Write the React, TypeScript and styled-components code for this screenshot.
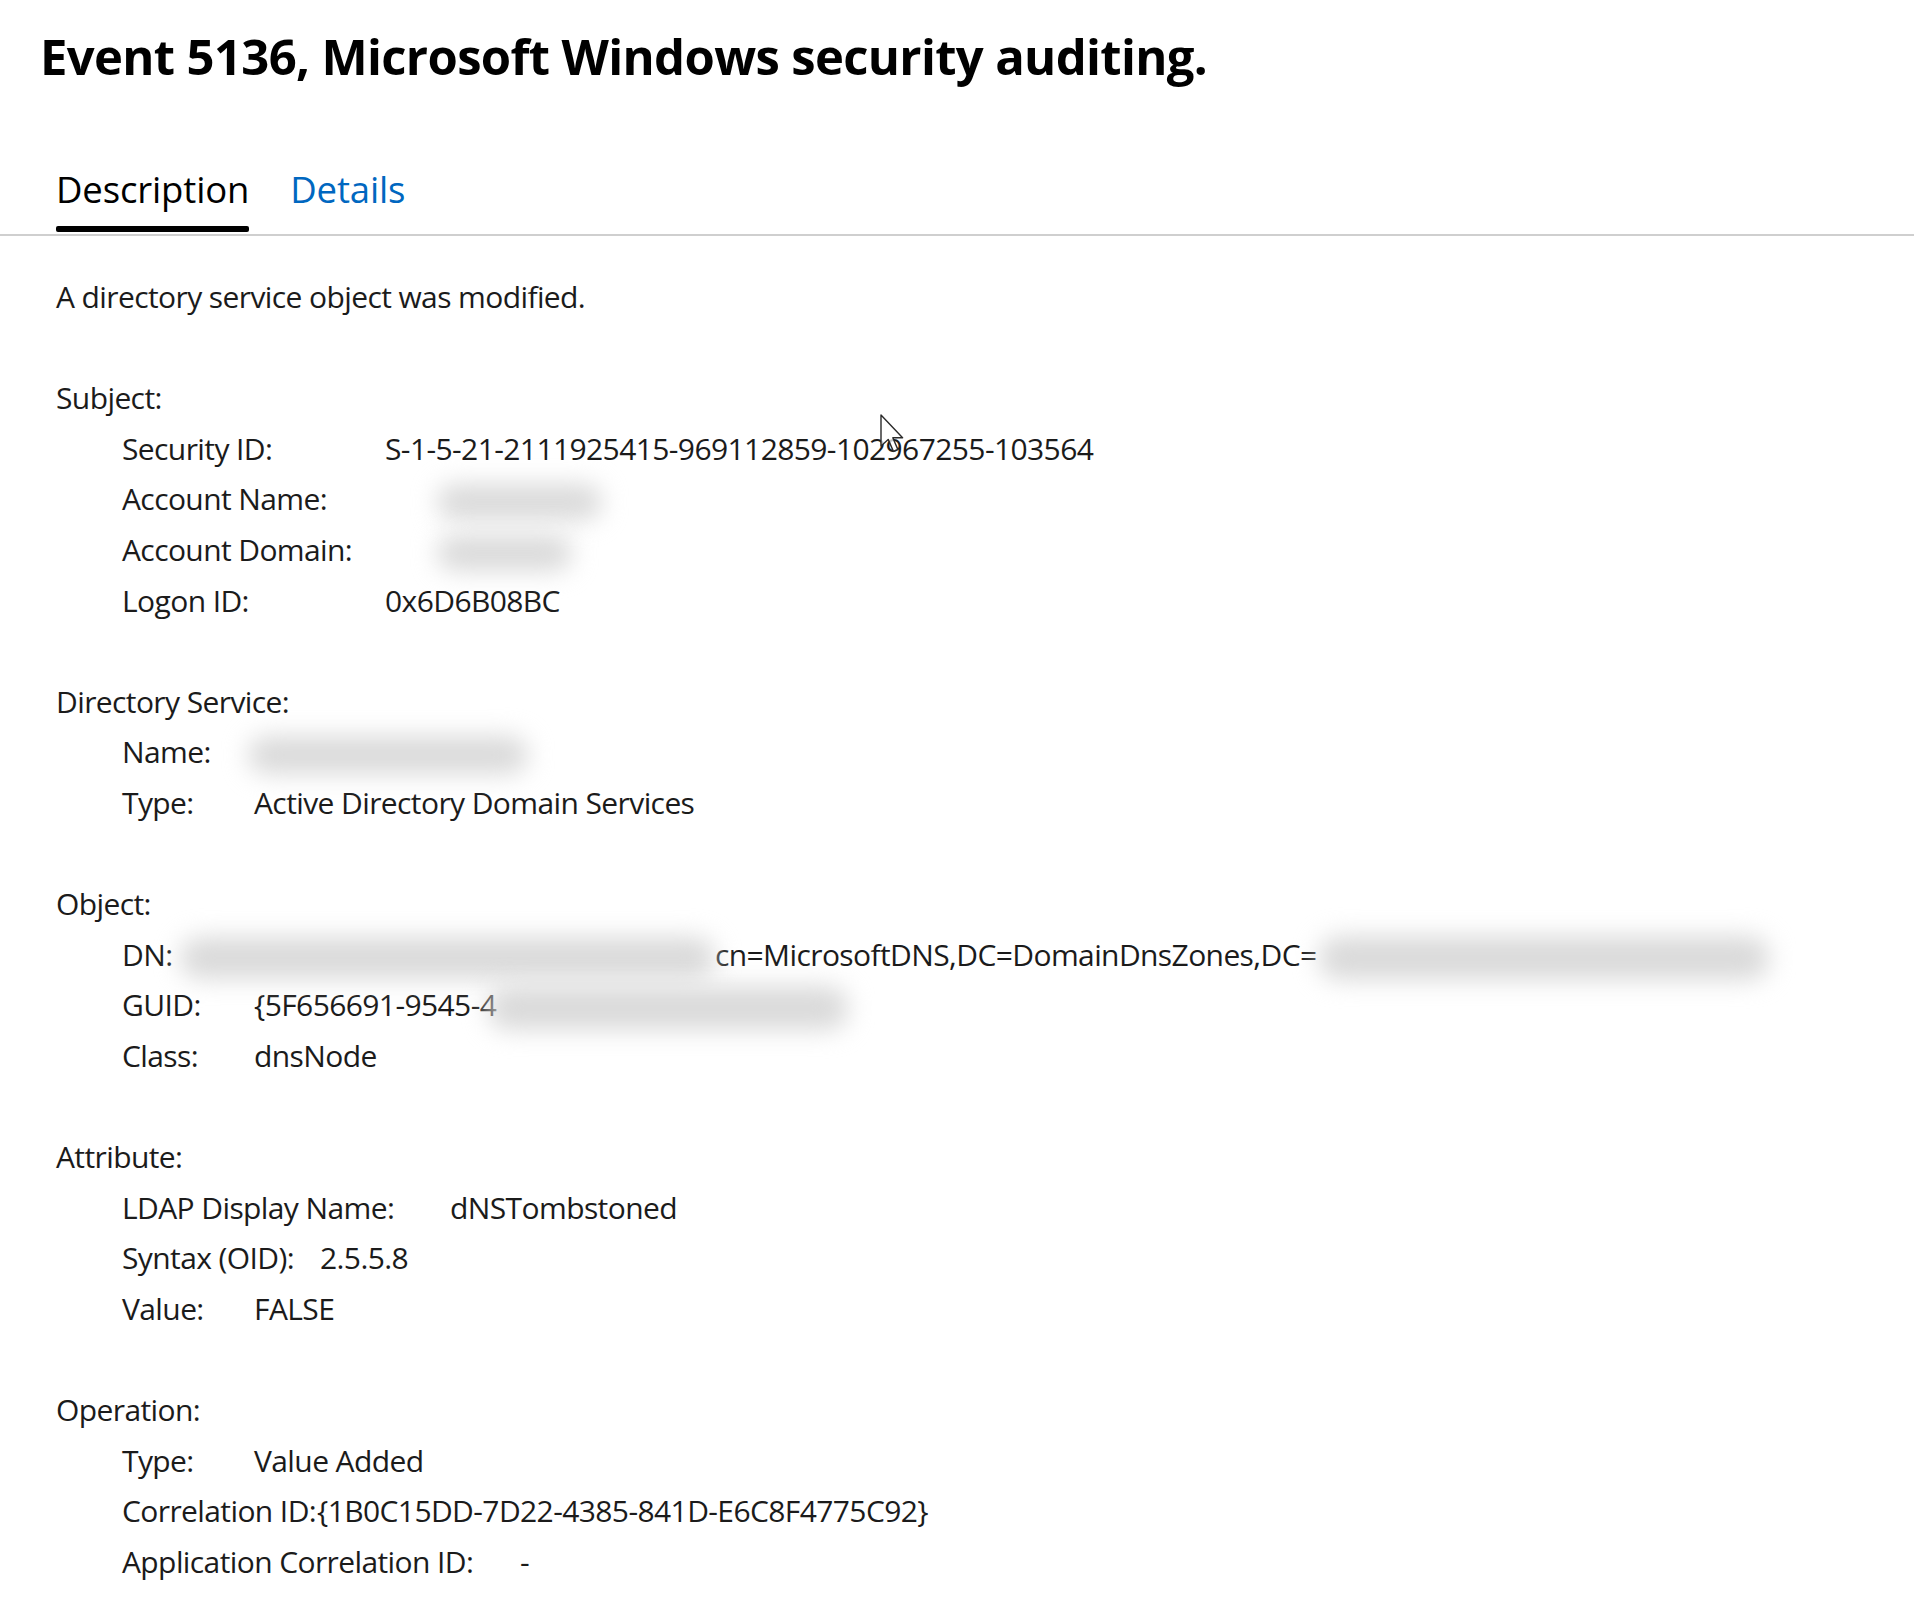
import React from "react";
import styled, { createGlobalStyle } from "styled-components";

const GlobalStyle = createGlobalStyle`
  html, body {
    margin: 0;
    padding: 0;
    background: #ffffff;
  }
  body {
    font-family: "Open Sans", "Noto Sans", "Liberation Sans", sans-serif;
    color: #1b1b1b;
  }
`;

const Page = styled.div`
  position: relative;
  width: 1914px;
  min-height: 1608px;
  background: #ffffff;
  overflow: hidden;
`;

const Title = styled.h1`
  margin: 0;
  padding: 26px 0 0 40px;
  font-size: 49px;
  line-height: 60px;
  font-weight: 700;
  color: #000000;
  letter-spacing: -0.65px;
`;

const TabList = styled.div`
  display: flex;
  align-items: flex-end;
  gap: 41px;
  margin-top: 79px;
  padding-left: 56px;
  border-bottom: 2px solid #cfcfcf;
`;

const Tab = styled.div<{ $active?: boolean }>`
  display: flex;
  flex-direction: column;
  font-size: 36.5px;
  line-height: 48px;
  letter-spacing: -0.15px;
  color: ${(p) => (p.$active ? "#000000" : "#0067c0")};
  font-weight: ${(p) => (p.$active ? 500 : 400)};
  &::after {
    content: "";
    display: block;
    height: 6px;
    margin-top: 13px;
    margin-bottom: 2px;
    border-radius: 2px;
    background: ${(p) => (p.$active ? "#000000" : "transparent")};
  }
`;

const Content = styled.div`
  padding: 36px 0 0 56px;
  font-size: 30px;
  line-height: 50.6px;
  letter-spacing: -0.6px;
  color: #1b1b1b;
`;

const Line = styled.div`
  white-space: nowrap;
`;

const Section = styled.section`
  margin-top: 50.6px;
`;

const Rows = styled.div`
  padding-left: 66px;
`;

const Row = styled.div`
  display: flex;
  align-items: baseline;
  height: 50.6px;
  white-space: nowrap;
`;

const Label = styled.span<{ $w: number }>`
  flex: none;
  min-width: ${(p) => p.$w}px;
`;

const Value = styled.span`
  display: block;
  white-space: nowrap;
`;

const Redacted = styled.span<{ $w: number; $h: number; $shift?: number }>`
  display: inline-block;
  width: ${(p) => p.$w}px;
  height: ${(p) => p.$h}px;
  margin-left: ${(p) => p.$shift ?? 0}px;
  background: #dadada;
  border-radius: 20px;
  filter: blur(12px);
  vertical-align: middle;
`;

const Cursor = styled.svg`
  position: absolute;
  left: 879px;
  top: 413px;
  pointer-events: none;
`;

export default function App() {
  return (
    <Page>
      <GlobalStyle />
      <Title>Event 5136, Microsoft Windows security auditing.</Title>
      <TabList>
        <Tab $active>Description</Tab>
        <Tab>Details</Tab>
      </TabList>
      <Content>
        <Line>A directory service object was modified.</Line>

        <Section>
          <Line>Subject:</Line>
          <Rows>
            <Row>
              <Label $w={263}>Security ID:</Label>
              <Value>S-1-5-21-2111925415-969112859-102967255-103564</Value>
            </Row>
            <Row>
              <Label $w={263}>Account Name:</Label>
              <Value>
                <Redacted $w={165} $h={36} $shift={52} />
              </Value>
            </Row>
            <Row>
              <Label $w={263}>Account Domain:</Label>
              <Value>
                <Redacted $w={135} $h={36} $shift={52} />
              </Value>
            </Row>
            <Row>
              <Label $w={263}>Logon ID:</Label>
              <Value>0x6D6B08BC</Value>
            </Row>
          </Rows>
        </Section>

        <Section>
          <Line>Directory Service:</Line>
          <Rows>
            <Row>
              <Label $w={132}>Name:</Label>
              <Value>
                <Redacted $w={280} $h={38} $shift={-6} />
              </Value>
            </Row>
            <Row>
              <Label $w={132}>Type:</Label>
              <Value>Active Directory Domain Services</Value>
            </Row>
          </Rows>
        </Section>

        <Section>
          <Line>Object:</Line>
          <Rows>
            <Row>
              <Label $w={56}>DN:</Label>
              <Value>
                <Redacted $w={535} $h={42} $shift={2} />
                cn=MicrosoftDNS,DC=DomainDnsZones,DC=
                <Redacted $w={450} $h={44} $shift={2} />
              </Value>
            </Row>
            <Row>
              <Label $w={132}>GUID:</Label>
              <Value>
                {"{5F656691-9545-4"}
                <Redacted $w={360} $h={44} $shift={-8} />
              </Value>
            </Row>
            <Row>
              <Label $w={132}>Class:</Label>
              <Value>dnsNode</Value>
            </Row>
          </Rows>
        </Section>

        <Section>
          <Line>Attribute:</Line>
          <Rows>
            <Row>
              <Label $w={328}>LDAP Display Name:</Label>
              <Value>dNSTombstoned</Value>
            </Row>
            <Row>
              <Label $w={198}>Syntax (OID):</Label>
              <Value>2.5.5.8</Value>
            </Row>
            <Row>
              <Label $w={132}>Value:</Label>
              <Value>FALSE</Value>
            </Row>
          </Rows>
        </Section>

        <Section>
          <Line>Operation:</Line>
          <Rows>
            <Row>
              <Label $w={132}>Type:</Label>
              <Value>Value Added</Value>
            </Row>
            <Row>
              <Label $w={195}>Correlation ID:</Label>
              <Value>{"{1B0C15DD-7D22-4385-841D-E6C8F4775C92}"}</Value>
            </Row>
            <Row>
              <Label $w={398}>Application Correlation ID:</Label>
              <Value>-</Value>
            </Row>
          </Rows>
        </Section>
      </Content>

      <Cursor width="28" height="42" viewBox="0 0 14 21">
        <path
          d="M1 1 L1 16.5 L4.6 13.2 L7.2 19.2 L9.4 18.2 L6.9 12.4 L11.8 12.4 Z"
          fill="#ffffff"
          fillOpacity="0.75"
          stroke="#2b2b2b"
          strokeWidth="0.7"
          strokeLinejoin="round"
        />
      </Cursor>
    </Page>
  );
}
